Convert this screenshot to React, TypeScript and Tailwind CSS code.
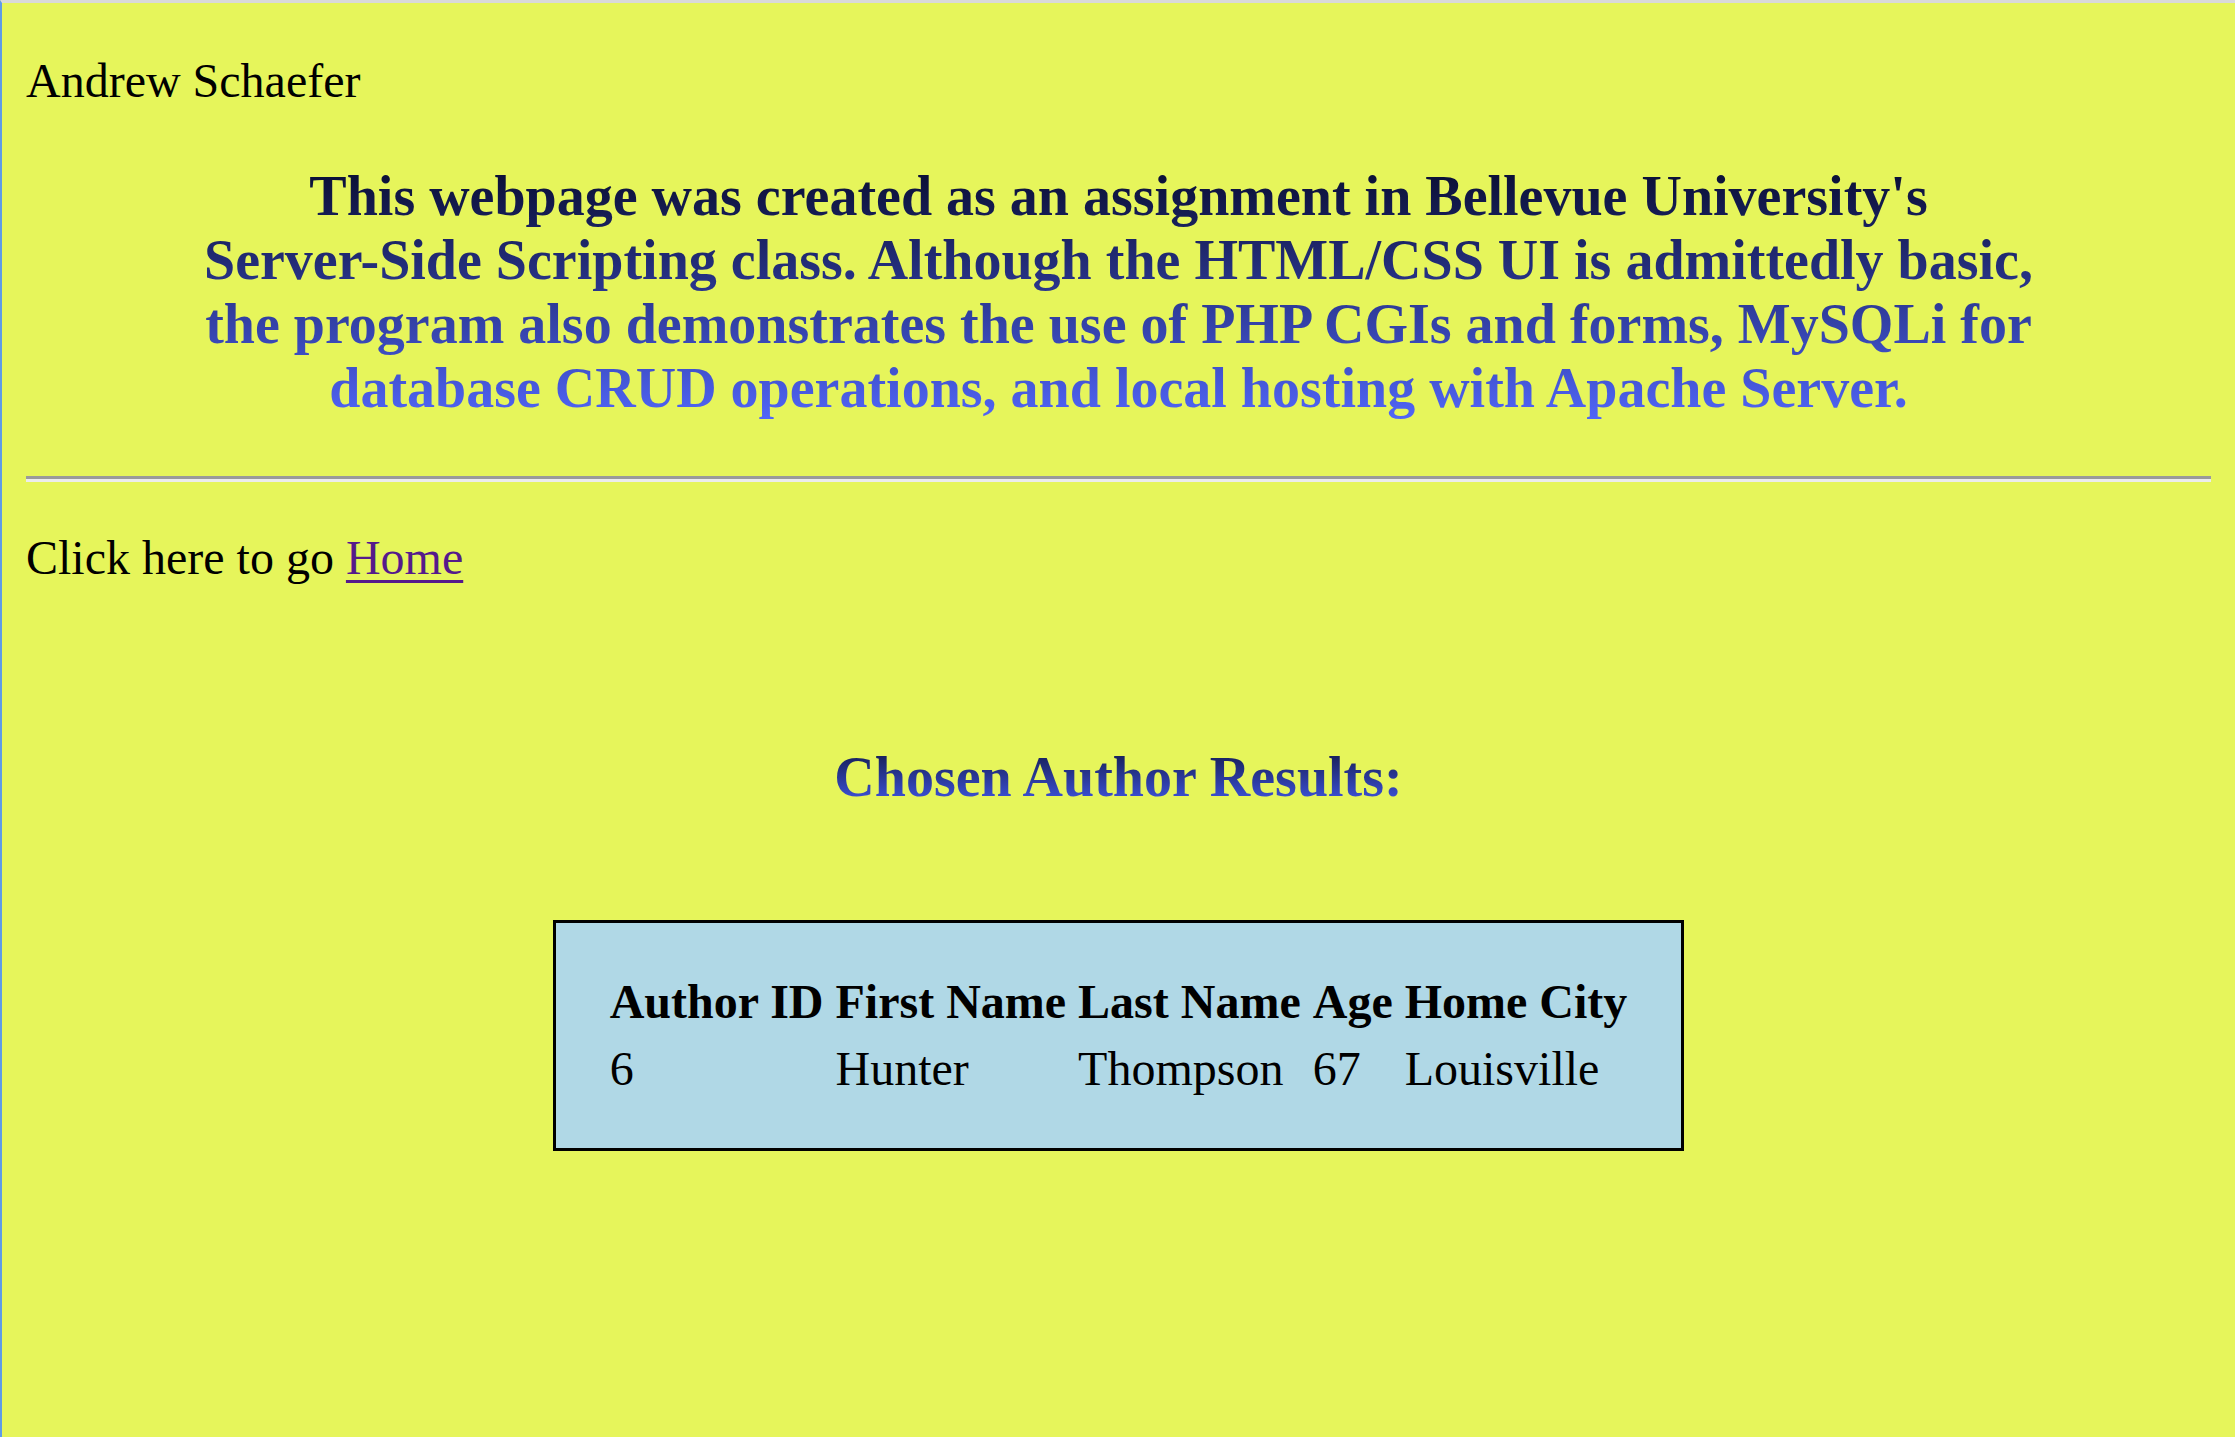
export default function App() {
  const headers = ["Author ID", "First Name", "Last Name", "Age", "Home City"];
  const row = ["6", "Hunter", "Thompson", "67", "Louisville"];
  return (
    <div
      className="min-h-screen bg-[#e6f55b] border-t-[3px] border-t-[#d9d9d9] border-l-2 border-l-[#5f9be6] px-6 pb-10 text-black"
      style={{ fontFamily: '"Liberation Serif", "Times New Roman", Times, serif' }}
    >
      <p className="mt-[50px] text-[48px] leading-[55px]">Andrew Schaefer</p>

      <h3 className="mx-auto mt-[56px] max-w-[1860px] bg-linear-to-b from-[#090d30] to-[#5166fa] bg-clip-text text-center text-[56px] font-bold leading-[64px] text-transparent">
        This webpage was created as an assignment in Bellevue University's{" "}
        <span className="whitespace-nowrap">Server-Side</span> Scripting class. Although the HTML/CSS UI is admittedly
        basic, the program also demonstrates the use of PHP CGIs and forms, MySQLi for database CRUD operations, and
        local hosting with Apache Server.
      </h3>

      <div className="mt-[56px] h-[6px] border-t-[3px] border-b-[3px] border-t-[#9a9a9a] border-b-[#ececec]" />

      <p className="mt-[48px] text-[48px] leading-[55px]">
        Click here to go{" "}
        <a href="#" className="text-[#551a8b] underline decoration-[3px] underline-offset-[6px]">
          Home
        </a>
      </p>

      <div className="mt-[160px] flex justify-center">
        <h3 className="bg-linear-to-b from-[#111744] to-[#445cf3] bg-clip-text text-[56px] font-bold leading-[64px] text-transparent">
          Chosen Author Results:
        </h3>
      </div>

      <div className="mt-[111px] flex justify-center">
        <div className="border-[3px] border-black bg-[#b0d8e6] px-[45px] pt-[42px] pb-[43px]">
          <table className="border-separate border-spacing-[6px] text-[48px] leading-[55px]">
            <thead>
              <tr>
                {headers.map((h) => (
                  <th key={h} className="px-[3px] py-[3px] text-left font-bold whitespace-nowrap">
                    {h}
                  </th>
                ))}
              </tr>
            </thead>
            <tbody>
              <tr>
                {row.map((c, i) => (
                  <td key={i} className="px-[3px] py-[3px] text-left whitespace-nowrap">
                    {c}
                  </td>
                ))}
              </tr>
            </tbody>
          </table>
        </div>
      </div>
    </div>
  );
}
